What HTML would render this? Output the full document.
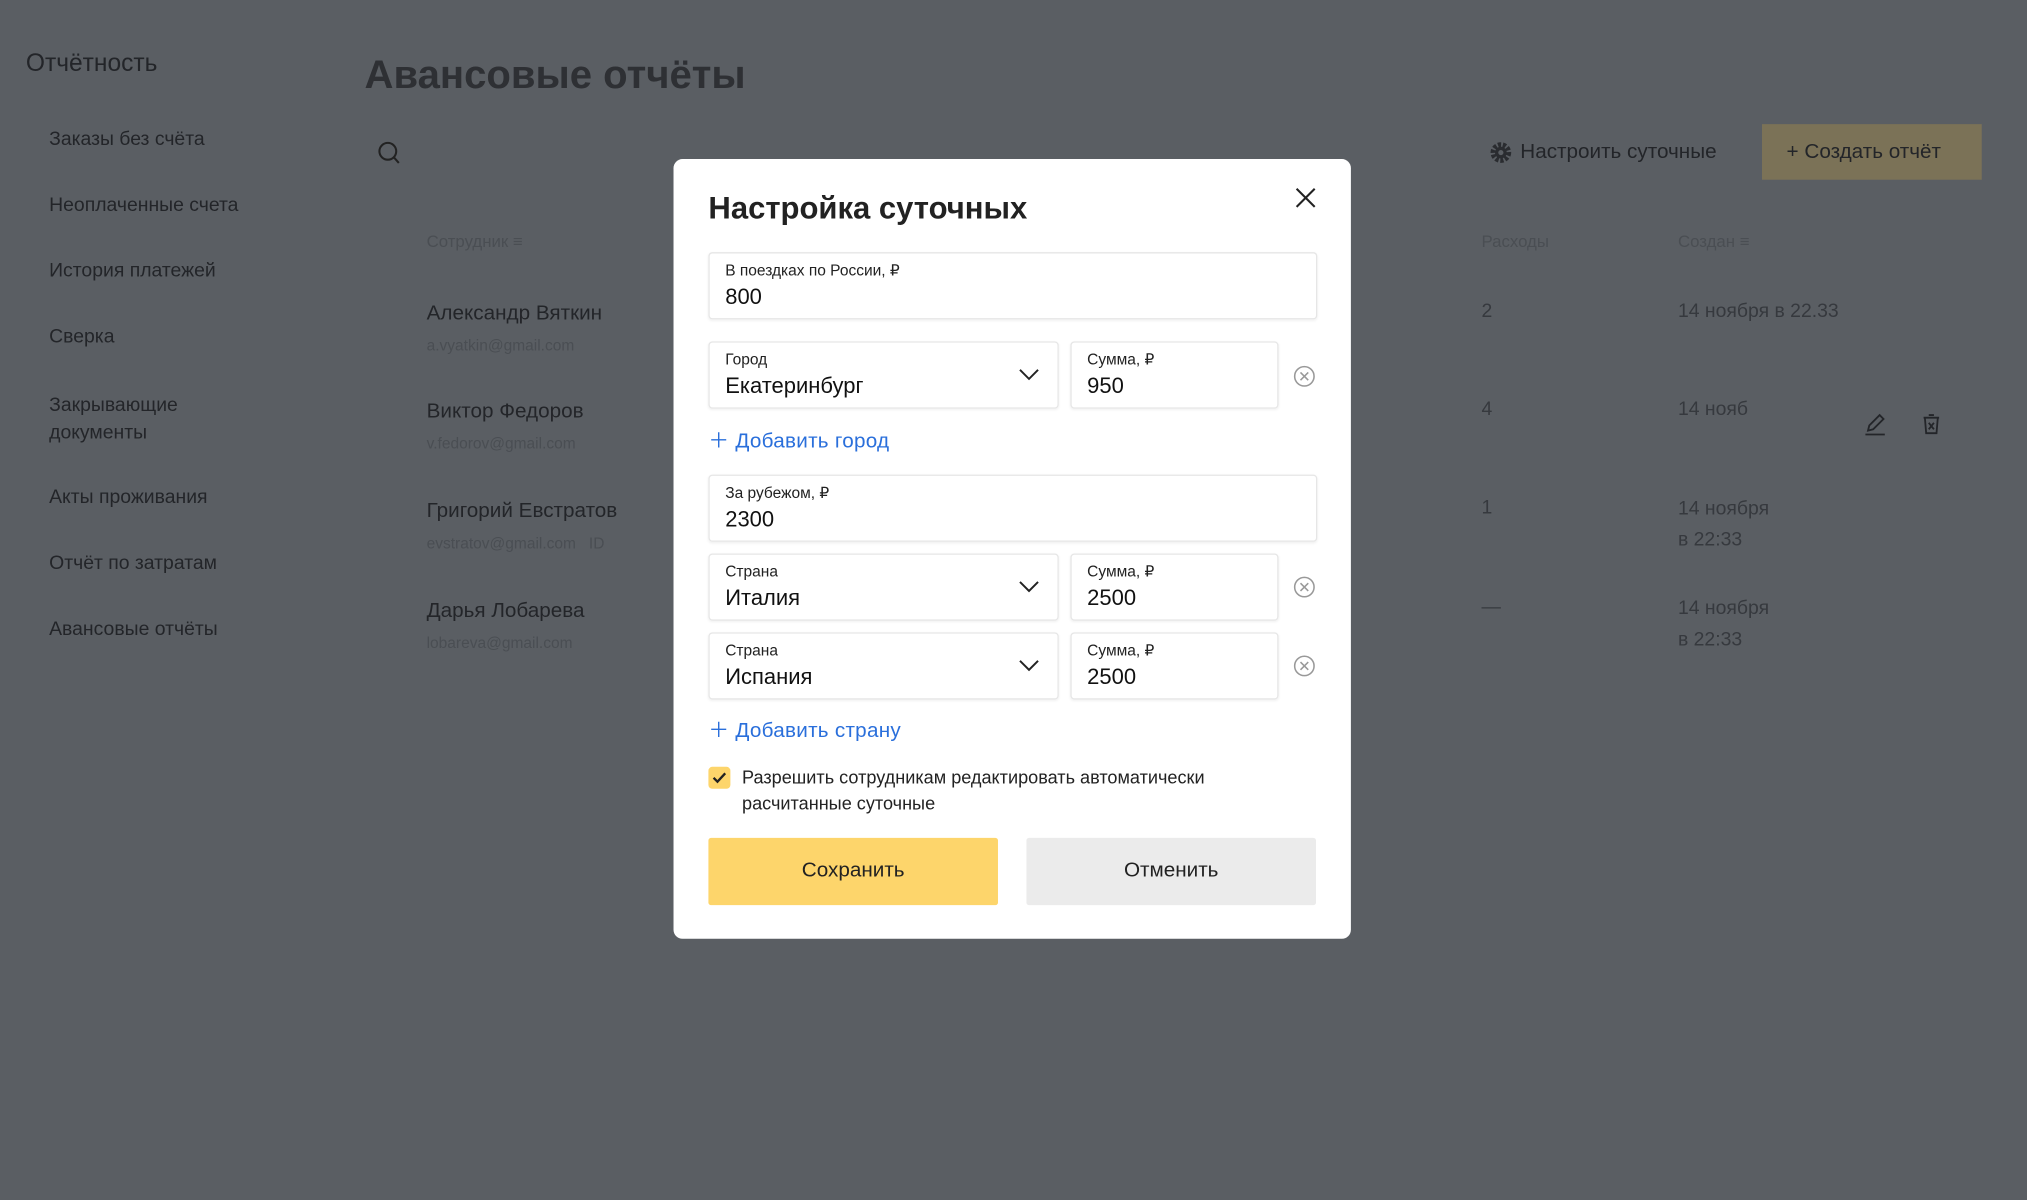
<!DOCTYPE html>
<html><head><meta charset="utf-8"><style>
html,body{margin:0;padding:0;width:2027px;height:1200px;overflow:hidden;background:#5a5e63;}
#w{position:absolute;left:0;top:0;width:1568px;height:928px;transform:scale(1.29273,1.2931);transform-origin:0 0;font-family:"Liberation Sans",sans-serif;color:#232529;}
.a{position:absolute;white-space:nowrap;}
.nav{font-size:15px;color:#232529;left:38px;}
.nm{font-size:16px;color:#232529;left:330px;}
.em{font-size:12px;color:#4a4e53;left:330px;}
.g{color:#36393e;font-size:15px;}
#m{position:absolute;left:521px;top:123px;width:524px;height:603px;background:#fff;border-radius:7px;}
.f{position:absolute;border:1px solid #e6e6e6;border-radius:3px;height:50px;box-shadow:0 1px 2px rgba(0,0,0,.06);}
.f .l{position:absolute;left:12px;top:6px;font-size:12px;color:#222;}
.f .v{position:absolute;left:12px;top:24px;font-size:17px;color:#111;}
.chev{position:absolute;right:14px;top:20px;}
.x{position:absolute;}
.add{position:absolute;left:27px;font-size:16px;color:#2a6fdb;letter-spacing:.2px;}
</style></head><body><div id="w">
<div class="a" style="left:20px;top:39px;font-size:19px;color:#232529">Отчётность</div>
<div class="a nav" style="top:99px">Заказы без счёта</div>
<div class="a nav" style="top:150px">Неоплаченные счета</div>
<div class="a nav" style="top:201px">История платежей</div>
<div class="a nav" style="top:252px">Сверка</div>
<div class="a nav" style="top:303px;line-height:21px">Закрывающие<br>документы</div>
<div class="a nav" style="top:376px">Акты проживания</div>
<div class="a nav" style="top:427px">Отчёт по затратам</div>
<div class="a nav" style="top:478px">Авансовые отчёты</div>
<div class="a" style="left:282px;top:40px;font-size:31px;font-weight:bold;color:#2e3034">Авансовые отчёты</div>
<svg class="a" style="left:291px;top:109px" width="20" height="20" viewBox="0 0 20 20"><circle cx="9" cy="8" r="6.5" fill="none" stroke="#222" stroke-width="1.6"/><path d="M13.5 12.5l4 4.5" stroke="#222" stroke-width="1.6"/></svg>
<div class="a" style="left:330px;top:179px;font-size:13px;color:#4a4e53">Сотрудник ≡</div>
<div class="a nm" style="top:234px">Александр Вяткин</div><div class="a em" style="top:260px">a.vyatkin@gmail.com</div>
<div class="a nm" style="top:310px">Виктор Федоров</div><div class="a em" style="top:336px">v.fedorov@gmail.com</div>
<div class="a nm" style="top:387px">Григорий Евстратов</div><div class="a em" style="top:413px">evstratov@gmail.com &nbsp; ID</div>
<div class="a nm" style="top:464px">Дарья Лобарева</div><div class="a em" style="top:490px">lobareva@gmail.com</div>
<svg class="a" style="left:1152px;top:109px" width="18" height="18" viewBox="0 0 18 18"><circle cx="9" cy="9" r="6" fill="none" stroke="#2a2c30" stroke-width="4" stroke-dasharray="2.4 1.3"/><circle cx="9" cy="9" r="4.5" fill="#2a2c30"/><circle cx="9" cy="9" r="2" fill="#5a5e63"/></svg>
<div class="a" style="left:1176px;top:109px;font-size:16px;color:#232529">Настроить суточные</div>
<div class="a" style="left:1363px;top:96px;width:170px;height:43px;background:#7b7257;"></div>
<div class="a" style="left:1382px;top:109px;font-size:16px;color:#232529">+ Создать отчёт</div>
<div class="a" style="left:1146px;top:179px;font-size:13px;color:#4a4e53">Расходы</div>
<div class="a" style="left:1298px;top:179px;font-size:13px;color:#4a4e53">Создан ≡</div>
<div class="a g" style="left:1146px;top:232px">2</div><div class="a g" style="left:1298px;top:232px">14 ноября в 22.33</div>
<div class="a g" style="left:1146px;top:308px">4</div><div class="a g" style="left:1298px;top:308px">14 нояб</div>
<div class="a g" style="left:1146px;top:384px">1</div><div class="a g" style="left:1298px;top:382px;line-height:24px">14 ноября<br>в 22:33</div>
<div class="a g" style="left:1146px;top:461px">—</div><div class="a g" style="left:1298px;top:459px;line-height:24px">14 ноября<br>в 22:33</div>
<svg class="a" style="left:1441px;top:318px" width="20" height="20" viewBox="0 0 20 20"><path d="M4 15l1-4 8-8 3 3-8 8z M2 18h15" fill="none" stroke="#232529" stroke-width="1.4"/></svg>
<svg class="a" style="left:1485px;top:318px" width="18" height="20" viewBox="0 0 18 20"><path d="M3 5h12M7 3h4M4 5l1 12h8l1-12M7 9l4 5M11 9l-4 5" fill="none" stroke="#232529" stroke-width="1.4"/></svg>

<div id="m">
<div class="a" style="left:27px;top:25px;font-size:24px;font-weight:bold;color:#222">Настройка суточных</div>
<svg class="x" style="left:480px;top:21px" width="18" height="18" viewBox="0 0 18 18"><path d="M2 2l14 14M16 2L2 16" stroke="#222" stroke-width="1.6"/></svg>
<div class="f" style="left:27px;top:72px;width:469px"><div class="l">В поездках по России, ₽</div><div class="v">800</div></div>
<div class="f" style="left:27px;top:141px;width:269px"><div class="l">Город</div><div class="v">Екатеринбург</div><svg class="chev" width="16" height="10" viewBox="0 0 16 10"><path d="M1 1l7 7 7-7" fill="none" stroke="#222" stroke-width="1.5"/></svg></div>
<div class="f" style="left:307px;top:141px;width:159px"><div class="l">Сумма, ₽</div><div class="v">950</div></div>
<svg class="x" style="left:479px;top:159px" width="18" height="18" viewBox="0 0 18 18"><circle cx="9" cy="9" r="7.5" fill="none" stroke="#999" stroke-width="1.2"/><path d="M6 6l6 6M12 6l-6 6" stroke="#999" stroke-width="1.2"/></svg>
<div class="add" style="top:204px">＋ Добавить город</div>
<div class="f" style="left:27px;top:244px;width:469px"><div class="l">За рубежом, ₽</div><div class="v">2300</div></div>
<div class="f" style="left:27px;top:305px;width:269px"><div class="l">Страна</div><div class="v">Италия</div><svg class="chev" width="16" height="10" viewBox="0 0 16 10"><path d="M1 1l7 7 7-7" fill="none" stroke="#222" stroke-width="1.5"/></svg></div>
<div class="f" style="left:307px;top:305px;width:159px"><div class="l">Сумма, ₽</div><div class="v">2500</div></div>
<svg class="x" style="left:479px;top:322px" width="18" height="18" viewBox="0 0 18 18"><circle cx="9" cy="9" r="7.5" fill="none" stroke="#999" stroke-width="1.2"/><path d="M6 6l6 6M12 6l-6 6" stroke="#999" stroke-width="1.2"/></svg>
<div class="f" style="left:27px;top:366px;width:269px"><div class="l">Страна</div><div class="v">Испания</div><svg class="chev" width="16" height="10" viewBox="0 0 16 10"><path d="M1 1l7 7 7-7" fill="none" stroke="#222" stroke-width="1.5"/></svg></div>
<div class="f" style="left:307px;top:366px;width:159px"><div class="l">Сумма, ₽</div><div class="v">2500</div></div>
<svg class="x" style="left:479px;top:383px" width="18" height="18" viewBox="0 0 18 18"><circle cx="9" cy="9" r="7.5" fill="none" stroke="#999" stroke-width="1.2"/><path d="M6 6l6 6M12 6l-6 6" stroke="#999" stroke-width="1.2"/></svg>
<div class="add" style="top:428px">＋ Добавить страну</div>
<div class="a" style="left:27px;top:470px;width:17px;height:17px;background:#fdd56b;border-radius:3px"></div>
<svg class="a" style="left:29px;top:472px" width="13" height="13" viewBox="0 0 13 13"><path d="M2 6.5l3 3 6-6.5" fill="none" stroke="#222" stroke-width="1.8"/></svg>
<div class="a" style="left:53px;top:468px;font-size:14px;line-height:20px;color:#222">Разрешить сотрудникам редактировать автоматически<br>расчитанные суточные</div>
<div class="a" style="left:27px;top:525px;width:224px;height:52px;background:#fdd56b;border-radius:2px;text-align:center;line-height:52px;font-size:16px;color:#222">Сохранить</div>
<div class="a" style="left:273px;top:525px;width:224px;height:52px;background:#ebebeb;border-radius:2px;text-align:center;line-height:52px;font-size:16px;color:#222">Отменить</div>
</div>
</div></body></html>
